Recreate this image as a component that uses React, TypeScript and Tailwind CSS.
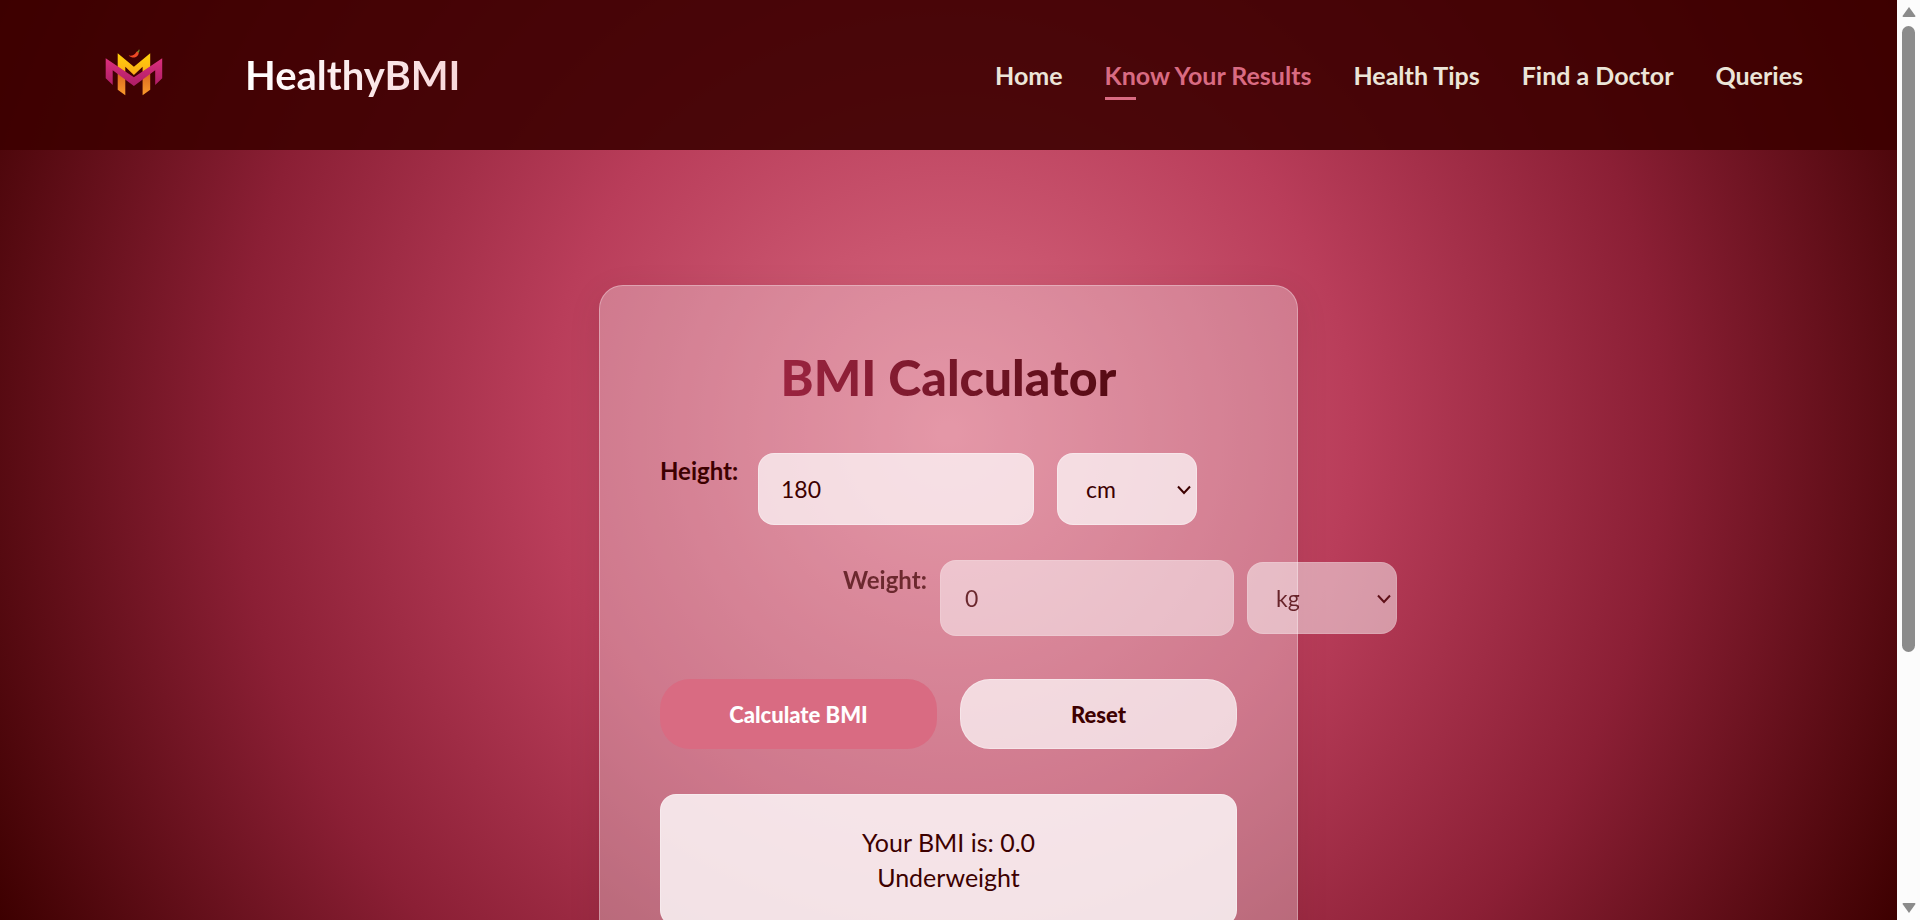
import { useState } from "react";
import type { ReactNode } from "react";

const links = ["Home", "Know Your Results", "Health Tips", "Find a Doctor", "Queries"];

function Logo() {
  return (
    <svg viewBox="0 0 80 80" className="size-20" role="img" aria-label="HealthyBMI logo">
      <defs>
        <linearGradient id="gold" x1="0" y1="0" x2="0" y2="1">
          <stop offset="0" stopColor="#ffd20a" />
          <stop offset="1" stopColor="#fbab18" />
        </linearGradient>
        <linearGradient id="orange" x1="0" y1="0" x2="0" y2="1">
          <stop offset="0" stopColor="#d9681f" />
          <stop offset="1" stopColor="#fb9a2c" />
        </linearGradient>
        <linearGradient id="magenta" x1="0" y1="0" x2="0" y2="1">
          <stop offset="0" stopColor="#dc2f7c" />
          <stop offset="1" stopColor="#ad1d66" />
        </linearGradient>
      </defs>
      <path
        d="M22.700 18.300 L38.900 31.700 L55.200 18.300 V32 L47.600 37 V31.700 L38.900 40 L30.300 31.700 V37 L22.700 32 Z"
        fill="url(#gold)"
      />
      <path d="M22.700 38 L30.300 43 V60.300 L22.700 54.700 Z M55.200 38 L47.600 43 V60.300 L55.200 54.700 Z" fill="url(#orange)" />
      <path
        d="M10.700 23.300 L38.900 42.300 L67.200 23.300 V43.300 L60.200 50 V35.300 L38.900 51 L17.700 35.300 V50 L10.700 43.300 Z"
        fill="url(#magenta)"
      />
      <path d="M33.700 20.500 C37 21 40 20 41 17.500 C41.700 16 43.500 16.500 43.700 18 C43.500 22 38 24.500 33.700 20.500 Z" fill="#f04a25" />
      <path d="M42 16.700 Q43.500 16 43.800 14.500 L44.700 14.800 Q44.500 16.500 43.700 17.700 Z" fill="#6f8f2c" />
    </svg>
  );
}

function UnitSelect({
  id,
  label,
  options,
  className,
}: {
  id: string;
  label: string;
  options: string[];
  className: string;
}) {
  return (
    <div className={`relative ${className}`}>
      <select
        id={id}
        aria-label={label}
        className="h-[72px] w-full appearance-none rounded-2xl border border-white/30 bg-white/70 pl-7 text-[23px] text-[#3d0000] outline-none"
      >
        {options.map((option) => (
          <option key={option}>{option}</option>
        ))}
      </select>
      <svg
        viewBox="0 0 14 10"
        className="pointer-events-none absolute top-8 right-1.5 h-2.5 w-3.5"
        fill="none"
        stroke="#3d0000"
        strokeWidth="2"
        aria-hidden="true"
      >
        <path d="M1 1.500 L7 8 L13 1.500" />
      </svg>
    </div>
  );
}

function FieldLabel({ htmlFor, children }: { htmlFor: string; children: ReactNode }) {
  return (
    <label htmlFor={htmlFor} className="text-2xl leading-9 font-bold text-[#3d0000]">
      {children}
    </label>
  );
}

function ScrollTrack() {
  return (
    <div className="flex w-[23px] shrink-0 flex-col items-center bg-[#fcfcfc] py-1.5" aria-hidden="true">
      <svg viewBox="0 0 14 12" className="h-3 w-3.5" fill="#8b8b8b">
        <path d="M7 1 L13.500 10 Q13.500 11 12.500 11 H1.500 Q0.500 11 0.500 10 Z" />
      </svg>
      <div className="mt-2 h-[626px] w-[13px] rounded-full bg-[#8b8b8b]" />
      <svg viewBox="0 0 14 12" className="mt-auto h-3 w-3.5" fill="#8b8b8b">
        <path d="M7 11 L13.500 2 Q13.500 1 12.500 1 H1.500 Q0.500 1 0.500 2 Z" />
      </svg>
    </div>
  );
}

export default function App() {
  const [height, setHeight] = useState("180");
  const [weight, setWeight] = useState("0");

  return (
    <div className="flex h-screen overflow-hidden font-['Lato','Noto_Sans',sans-serif] text-[#3d0000]">
      <div className="flex min-w-0 flex-1 flex-col overflow-hidden bg-[radial-gradient(circle_at_50%_47%,#d96b82_0%,#b93d5a_38%,#8b1f35_67%,#3d0000_100%)]">
        <header className="flex h-[150px] shrink-0 items-center justify-between bg-[#3d0000]/90 pr-[94px] pl-[95px]">
          <div className="flex items-center gap-[70px]">
            <Logo />
            <span className="bg-linear-to-r from-white to-[#f8d7da] bg-clip-text text-[40px] leading-[52px] font-bold text-transparent">
              HealthyBMI
            </span>
          </div>
          <nav className="flex gap-[42px] text-[25px] leading-[50px] font-bold">
            {links.map((link) =>
              link === "Know Your Results" ? (
                <a
                  key={link}
                  href="#results"
                  aria-current="page"
                  className="relative text-[#d96b82] after:absolute after:bottom-0 after:left-0 after:h-[3px] after:w-[31px] after:bg-[#d96b82]"
                >
                  {link}
                </a>
              ) : (
                <a key={link} href="#" className="text-[#ece5d8]">
                  {link}
                </a>
              ),
            )}
          </nav>
        </header>

        <main className="flex justify-center pt-[135px]">
          <section className="w-full max-w-[699px] shrink-0 rounded-3xl border border-white/30 bg-white/30 p-[60px] shadow-[0_8px_32px_rgba(61,0,0,0.1)]">
            <h1 className="text-center text-[50px] leading-[62px] font-black">
              <span className="bg-linear-to-r from-[#9b2440] to-[#560b14] bg-clip-text text-transparent">
                BMI Calculator
              </span>
            </h1>

            <div className="mt-[45px] flex items-start">
              <div className="w-[98px] shrink-0">
                <FieldLabel htmlFor="height">Height:</FieldLabel>
              </div>
              <input
                id="height"
                type="text"
                inputMode="decimal"
                value={height}
                onChange={(e) => setHeight(e.target.value)}
                className="h-[72px] w-[276px] shrink-0 rounded-2xl border border-white/30 bg-white/70 px-[22px] text-[23px] outline-none"
              />
              <UnitSelect id="height-unit" label="Height unit" options={["cm", "in"]} className="ml-[23px] w-[140px] shrink-0" />
            </div>

            <div className="mt-[35px] ml-[183px] flex items-start opacity-70">
              <div className="w-[97px] shrink-0 pt-0.5">
                <FieldLabel htmlFor="weight">Weight:</FieldLabel>
              </div>
              <input
                id="weight"
                type="text"
                inputMode="decimal"
                value={weight}
                onChange={(e) => setWeight(e.target.value)}
                className="h-[76px] w-[294px] shrink-0 rounded-2xl border border-white/30 bg-white/70 px-6 text-[23px] outline-none"
              />
              <UnitSelect id="weight-unit" label="Weight unit" options={["kg", "lb"]} className="mt-0.5 ml-[13px] w-[150px] shrink-0" />
            </div>

            <div className="mt-[43px] grid grid-cols-2 gap-[23px] text-[22px] font-black">
              <button type="button" className="h-[70px] rounded-[30px] bg-[#d96b82] text-white">
                Calculate BMI
              </button>
              <button type="button" className="h-[70px] rounded-[30px] border border-white/30 bg-white/70">
                Reset
              </button>
            </div>

            <div className="mt-[45px] rounded-2xl border border-white/30 bg-white/80 px-8 py-[30px] text-center text-[25px] leading-[35px]">
              <p>Your BMI is: 0.0</p>
              <p>Underweight</p>
            </div>
          </section>
        </main>
      </div>
      <ScrollTrack />
    </div>
  );
}
